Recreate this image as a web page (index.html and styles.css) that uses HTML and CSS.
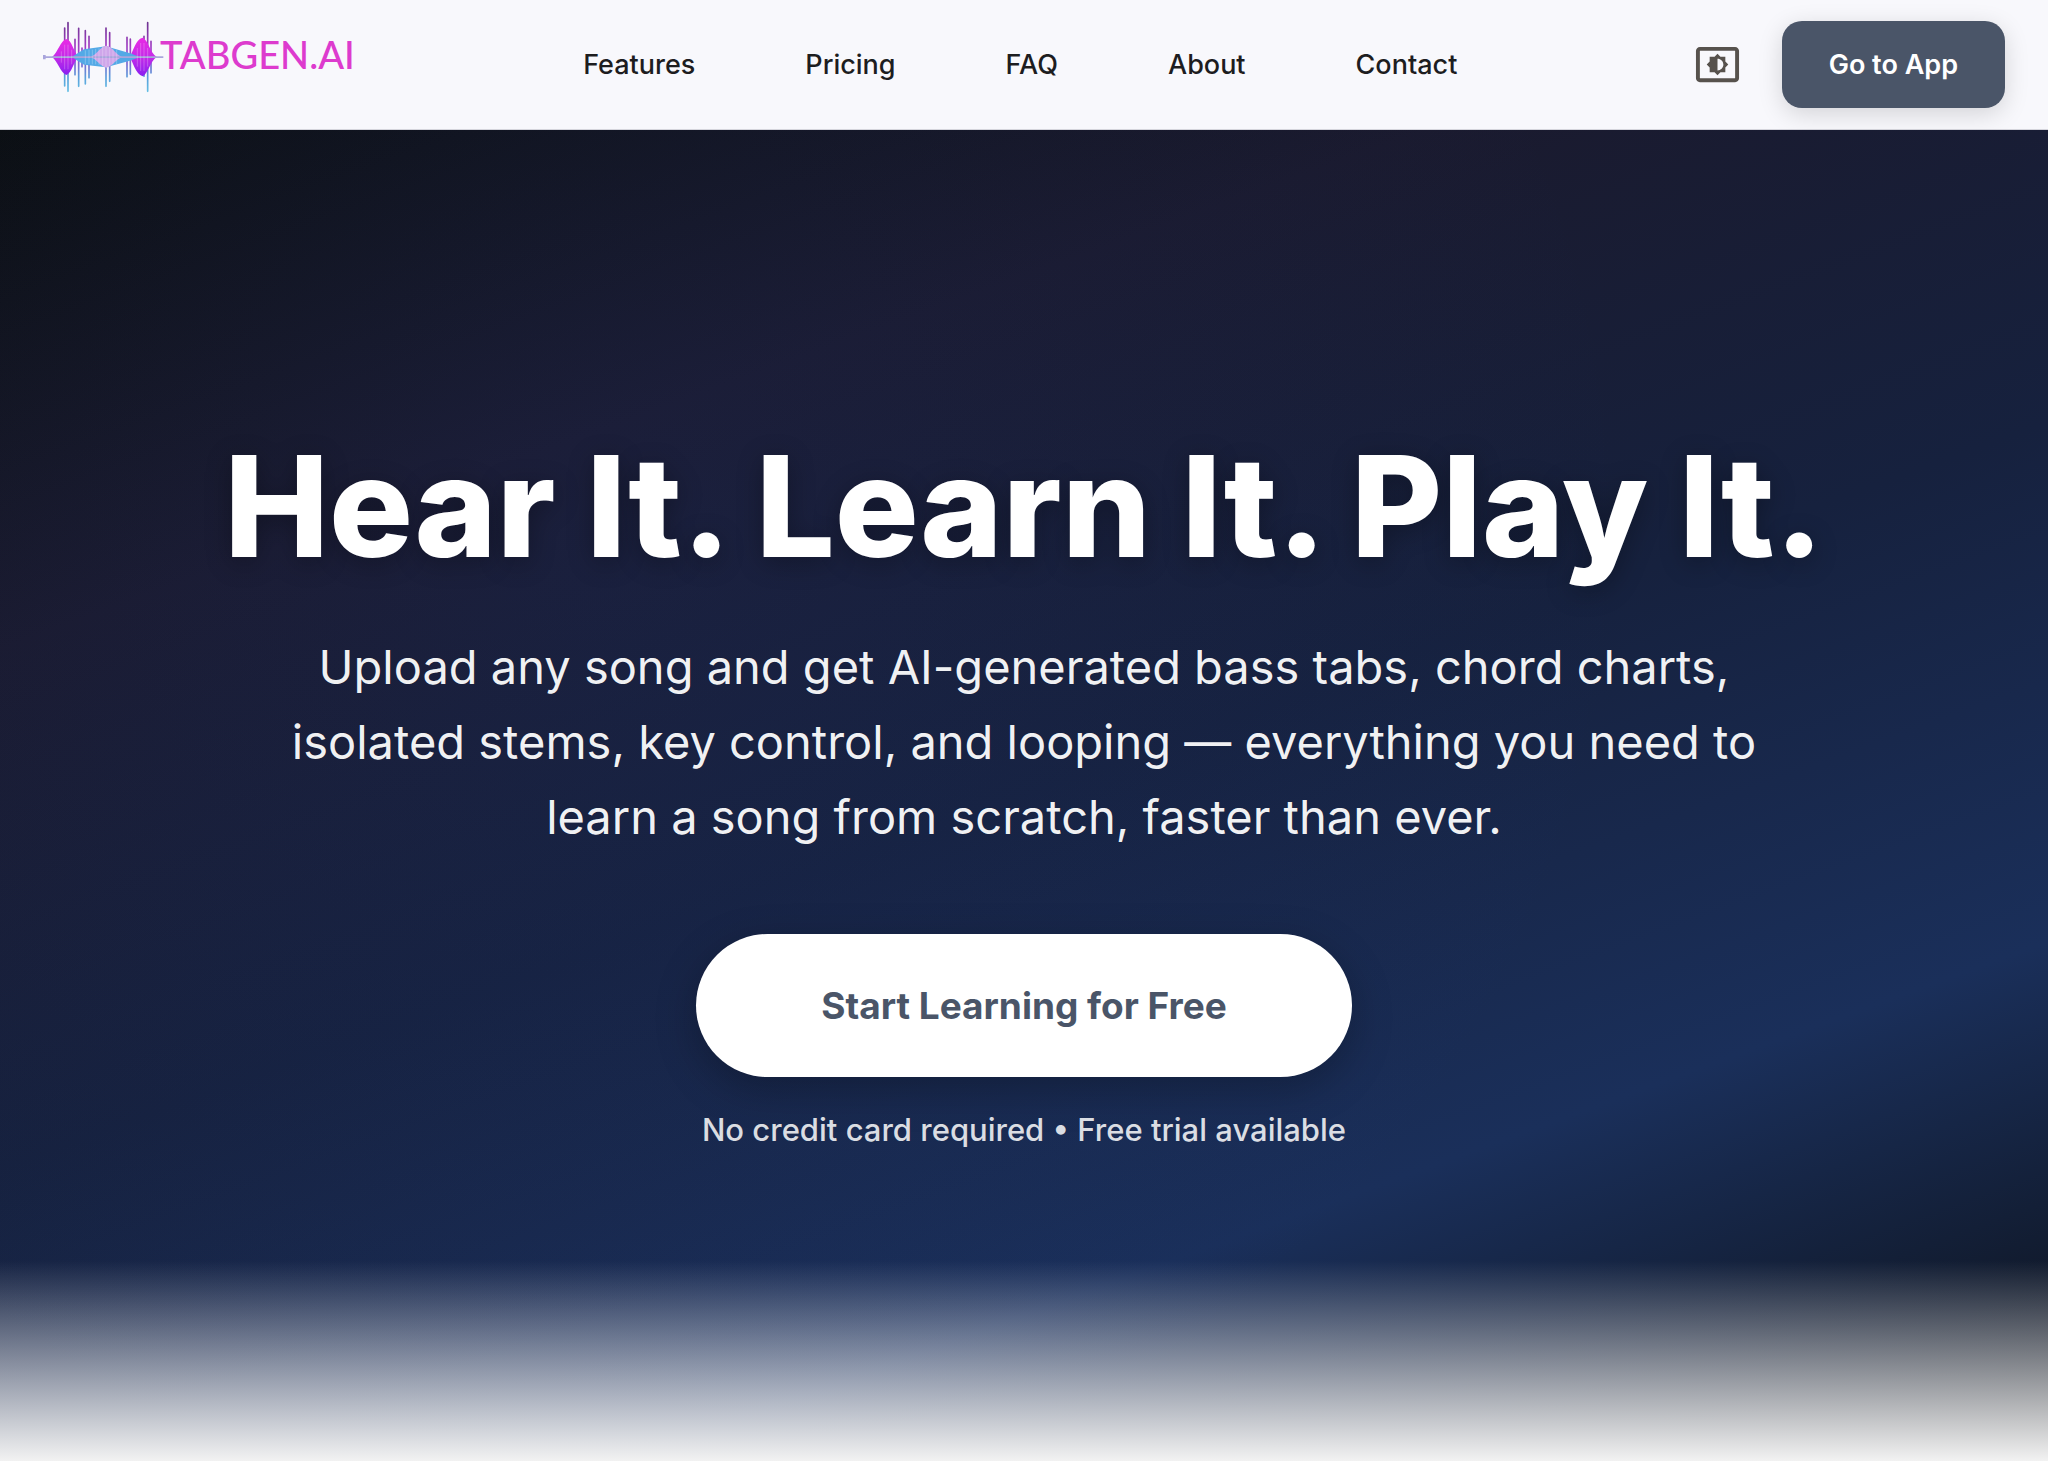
FILE: index.html
```html
<!DOCTYPE html>
<html lang="en">
<head>
<meta charset="utf-8">
<meta name="viewport" content="width=device-width, initial-scale=1">
<title>TABGEN.AI</title>
<link rel="stylesheet" href="styles.css">
</head>
<body>
<header class="header">
  <a class="logo" href="#">
    <svg class="logo-wave" viewBox="39 34 351 198" aria-hidden="true">
      <defs>
        <linearGradient id="bar" gradientUnits="userSpaceOnUse" x1="0" y1="37" x2="0" y2="247">
          <stop offset="0" stop-color="#6d3390"/>
          <stop offset=".35" stop-color="#a23fc4"/>
          <stop offset=".6" stop-color="#7a6bd0"/>
          <stop offset=".8" stop-color="#5aa0dc"/>
          <stop offset="1" stop-color="#62bfe4"/>
        </linearGradient>
        <linearGradient id="blob" x1="0" y1="0" x2="0" y2="1">
          <stop offset="0" stop-color="#ea2be4"/>
          <stop offset=".5" stop-color="#c52be8"/>
          <stop offset="1" stop-color="#8a1ff0"/>
        </linearGradient>
      </defs>
      <g stroke="url(#bar)" stroke-width="5" stroke-linecap="round">
        <path d="M104 55v174M114 39v206M135 89v106M146 56v174M156 115v56M166 63v160M177 80v124M228 55v175M239 69v146M291 83v118M301 88v106M342 80v120M353 39v206M363 95v95"/>
      </g>
      <path d="M66 142C84 128 92 92 109 88C126 92 130 126 146 142C130 156 126 190 109 196C92 190 84 156 66 142Z" fill="url(#blob)"/>
      <path d="M298 142C310 128 316 88 338 84C354 90 360 128 380 142C360 156 354 192 338 200C316 194 310 156 298 142Z" fill="url(#blob)"/>
      <path d="M125 142L162 119L228 110L300 131L330 142L300 153L228 173L162 165Z" fill="#53a9e6"/>
      <path d="M182 142C202 134 210 110 229 108C248 110 256 134 276 142C256 150 248 170 229 174C210 170 202 150 182 142Z" fill="#cfa6ea"/>
      <path d="M39 136h8v4h353v5H47v4h-8z" fill="#a9a5dc"/>
      <g stroke="#ffffff" stroke-opacity=".25" stroke-width="3">
        <path d="M94 125v34M104 105v74M114 105v74M125 120v44M166 122v42M177 121v42M187 120v44M197 118v46M207 116v50M218 112v58M228 110v62M239 112v58M249 118v46M260 121v42M322 115v56M332 100v84M342 100v84M353 115v56"/>
      </g>
    </svg>
    <span class="logo-text">TABGEN.AI</span>
  </a>
  <nav class="nav">
    <a href="#features">Features</a>
    <a href="#pricing">Pricing</a>
    <a href="#faq">FAQ</a>
    <a href="#about">About</a>
    <a href="#contact">Contact</a>
  </nav>
  <div class="actions">
    <button class="theme-toggle" type="button" aria-label="Toggle theme">
      <svg viewBox="0 0 24 24" aria-hidden="true"><path d="M21 3H3c-1.100 0-2 .9-2 2v14c0 1.100.9 2 2 2h18c1.100 0 2-.9 2-2V5c0-1.100-.9-2-2-2zm0 16.010H3V4.990h18v14.020zM8 16h2.500l1.500 1.500 1.500-1.500H16v-2.500l1.500-1.500-1.500-1.500V8h-2.500L12 6.500 10.500 8H8v2.500L6.500 12 8 13.500V16zm4-7c1.660 0 3 1.340 3 3s-1.340 3-3 3V9z"/></svg>
    </button>
    <button class="app-button" type="button">Go to App</button>
  </div>
</header>
<main class="hero">
  <h1 class="title">Hear It. Learn It. Play It.</h1>
  <p class="lead">Upload any song and get AI-generated bass tabs, chord charts, isolated stems, key control, and looping — everything you need to learn a song from scratch, faster than ever.</p>
  <button class="cta" type="button">Start Learning for Free</button>
  <p class="note">No credit card required • Free trial available</p>
</main>
</body>
</html>
```
FILE: styles.css
```css
* {
  box-sizing: border-box;
}

body {
  margin: 0;
  min-height: 100vh;
  display: flex;
  flex-direction: column;
  font-family: Inter, "Liberation Sans", sans-serif;
  font-optical-sizing: none;
  background: #f2f2f2;
}

button {
  border: 0;
  font-family: inherit;
  cursor: pointer;
}

.header {
  display: flex;
  align-items: center;
  justify-content: space-between;
  padding: 21px 43px;
  background: #f8f8fc;
  border-bottom: 1px solid #d5d5dc;
}

.logo {
  display: flex;
  align-items: center;
  align-self: flex-start;
  text-decoration: none;
}

.logo-wave {
  width: 117px;
  height: 66px;
  overflow: visible;
}

.logo-text {
  font-family: Lato, sans-serif;
  font-size: 38px;
  line-height: 48px;
  font-weight: 500;
  color: #dd3bce;
}

.nav {
  display: flex;
  gap: 110px;
}

.nav a {
  font-size: 27px;
  font-weight: 500;
  color: #1d1d1f;
  text-decoration: none;
}

.actions {
  display: flex;
  align-items: center;
  gap: 33px;
}

.theme-toggle {
  display: flex;
  padding: 8px;
  background: none;
}

.theme-toggle svg {
  width: 47px;
  height: 47px;
  fill: #57524d;
}

.app-button {
  padding: 27px 47px;
  font-size: 27px;
  line-height: 33px;
  font-weight: 600;
  color: #fff;
  background: #4a5568;
  border-radius: 20px;
  box-shadow: 0 6px 24px rgba(0, 0, 0, 0.15);
}

.hero {
  flex: 1;
  display: flex;
  flex-direction: column;
  align-items: center;
  justify-content: center;
  padding: 104px 48px 116px;
  text-align: center;
  color: #fff;
  background:
    linear-gradient(to top, #f2f2f2, rgba(242, 242, 242, 0)) bottom / 100% 200px no-repeat,
    radial-gradient(circle at 30% 30%, rgba(40, 80, 200, 0.08), rgba(40, 80, 200, 0) 60%),
    linear-gradient(160deg, #0b0e10 0%, #1a1a2e 25%, #16213e 50%, #1a2f5a 75%, #0c0f14 100%);
}

.title {
  margin: 0;
  font-size: 140px;
  line-height: 156px;
  font-weight: 800;
  text-shadow: 0 5px 27px rgba(0, 0, 0, 0.3);
}

.lead {
  max-width: 1500px;
  margin: 45px 0 0;
  font-size: 47px;
  line-height: 75px;
  color: rgba(255, 255, 255, 0.95);
}

.cta {
  margin-top: 80px;
  padding: 48px 125px;
  font-size: 37px;
  line-height: 47px;
  font-weight: 700;
  color: #4a5568;
  background: #fff;
  border-radius: 72px;
  box-shadow: 0 12px 40px rgba(0, 0, 0, 0.25);
}

.note {
  margin: 32px 0 0;
  font-size: 31px;
  line-height: 42px;
  font-weight: 500;
  color: rgba(255, 255, 255, 0.85);
}
```
